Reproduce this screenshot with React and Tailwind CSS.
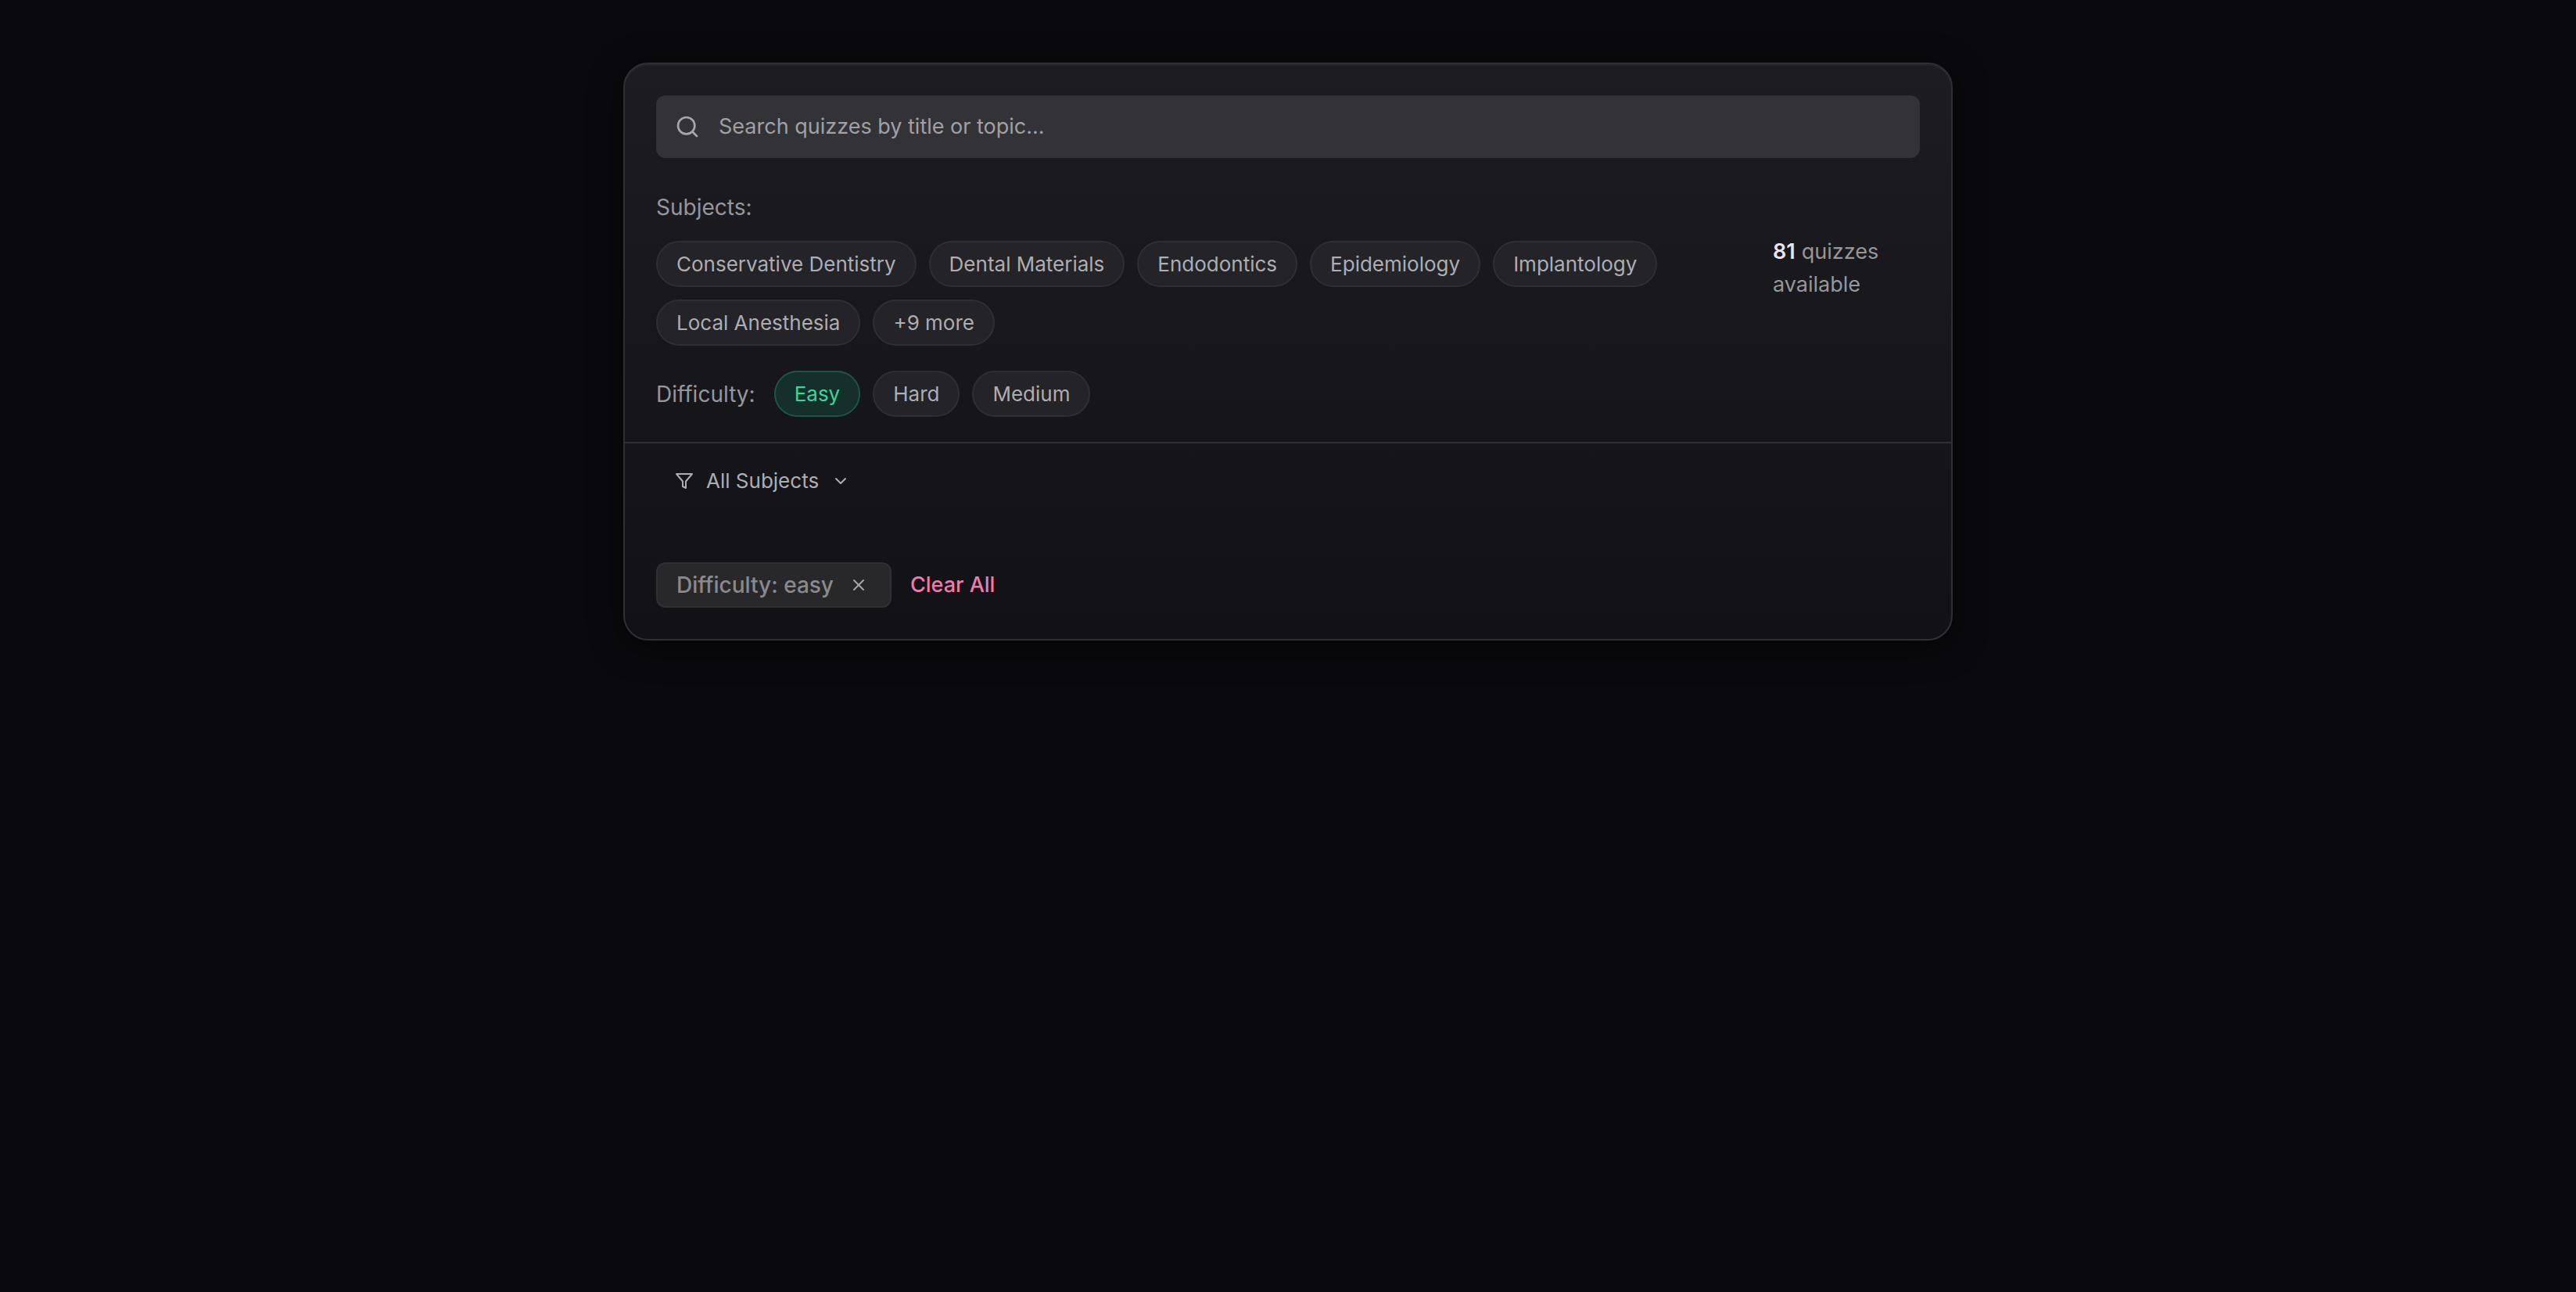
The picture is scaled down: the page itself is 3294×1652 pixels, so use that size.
import { ChevronDown, Search, X } from "lucide-react";
import { useState } from "react";

const SUBJECTS = [
  "Conservative Dentistry",
  "Dental Materials",
  "Endodontics",
  "Epidemiology",
  "Implantology",
  "Local Anesthesia",
];

const LEVELS = ["Easy", "Hard", "Medium"];

function Chip({ active, onClick, children }) {
  return (
    <button
      type="button"
      aria-pressed={active}
      onClick={onClick}
      className={
        active
          ? "h-[59px] rounded-full border-2 border-[#1b5645] bg-[#15302a] px-6 text-[26px] text-[#3fd39c]"
          : "h-[59px] rounded-full border-2 border-[#2e2e33] bg-[#232328] px-6 text-[26px] text-[#adadb2]"
      }
    >
      {children}
    </button>
  );
}

function FunnelIcon() {
  return (
    <svg
      viewBox="0 0 24 24"
      fill="none"
      stroke="currentColor"
      strokeWidth="2"
      strokeLinejoin="round"
      className="size-6"
      aria-hidden="true"
    >
      <path d="M2 3h20l-8 9.5V21l-4-2v-6.5z" />
    </svg>
  );
}

export default function App() {
  const [query, setQuery] = useState("");
  const [subject, setSubject] = useState("");
  const [level, setLevel] = useState("Easy");

  const clearAll = () => {
    setQuery("");
    setSubject("");
    setLevel("");
  };

  return (
    <div className="min-h-screen bg-[#0a0a0e] px-6 py-20 font-[Inter,sans-serif] text-[28px] leading-[42px] text-[#96969b]">
      <div className="mx-auto max-w-[1700px] rounded-[32px] border-2 border-[#2f2f34] bg-linear-to-b from-[#1d1d21] to-[#121216] shadow-[0_8px_40px_rgba(0,0,0,0.5),inset_0_2px_0_rgba(255,255,255,0.04)]">
        {/* Search and chips */}
        <div className="border-b-2 border-[#2f2f34] px-10 pt-10 pb-8">
          <label className="flex h-20 items-center gap-6 rounded-xl bg-[#333337] px-6">
            <Search className="size-8 text-[#a6a6ab]" strokeWidth={2} />
            <input
              type="text"
              aria-label="Search quizzes"
              placeholder="Search quizzes by title or topic..."
              value={query}
              onChange={(e) => setQuery(e.target.value)}
              className="min-w-0 flex-1 bg-transparent text-[27px] outline-none placeholder:text-[#a0a0a5]"
            />
          </label>

          <div className="mt-[42px] flex items-center gap-10">
            <div className="flex-1">
              <p>Subjects:</p>
              <div className="mt-[22px] flex flex-wrap gap-4">
                {SUBJECTS.map((s) => (
                  <Chip
                    key={s}
                    active={subject === s}
                    onClick={() => setSubject(s)}
                  >
                    {s}
                  </Chip>
                ))}
                <Chip>+9 more</Chip>
              </div>
            </div>
            <p className="flex w-47 flex-wrap gap-x-2 text-[27px]">
              <span className="font-semibold text-[#e6e6ea]">81</span>
              <span>quizzes</span>
              <span>available</span>
            </p>
          </div>

          <div className="mt-8 flex items-center gap-6">
            <p>Difficulty:</p>
            <div className="flex gap-4">
              {LEVELS.map((l) => (
                <Chip key={l} active={level === l} onClick={() => setLevel(l)}>
                  {l}
                </Chip>
              ))}
            </div>
          </div>
        </div>

        {/* Subject menu */}
        <div className="px-10 pt-4">
          <button
            type="button"
            aria-haspopup="menu"
            className="flex h-16 items-center gap-4 px-6 text-[26px] text-[#adadb2]"
          >
            <FunnelIcon />
            All Subjects
            <ChevronDown className="size-6" strokeWidth={2} />
          </button>
        </div>

        {/* Active filters */}
        <div className="flex items-center gap-6 px-10 pt-[72px] pb-10">
          {level && (
            <span className="flex h-[58px] items-center gap-4 rounded-xl border-2 border-[#303034] bg-[#28282a] px-6 font-medium text-[#8a8a8d]">
              Difficulty: {level.toLowerCase()}
              <button
                type="button"
                aria-label="Remove difficulty filter"
                onClick={() => setLevel("")}
                className="p-1 text-[#a6a6ab]"
              >
                <X className="size-6" strokeWidth={2} />
              </button>
            </span>
          )}
          <button
            type="button"
            onClick={clearAll}
            className="text-[27px] font-medium text-[#ed7bb0]"
          >
            Clear All
          </button>
        </div>
      </div>
    </div>
  );
}
